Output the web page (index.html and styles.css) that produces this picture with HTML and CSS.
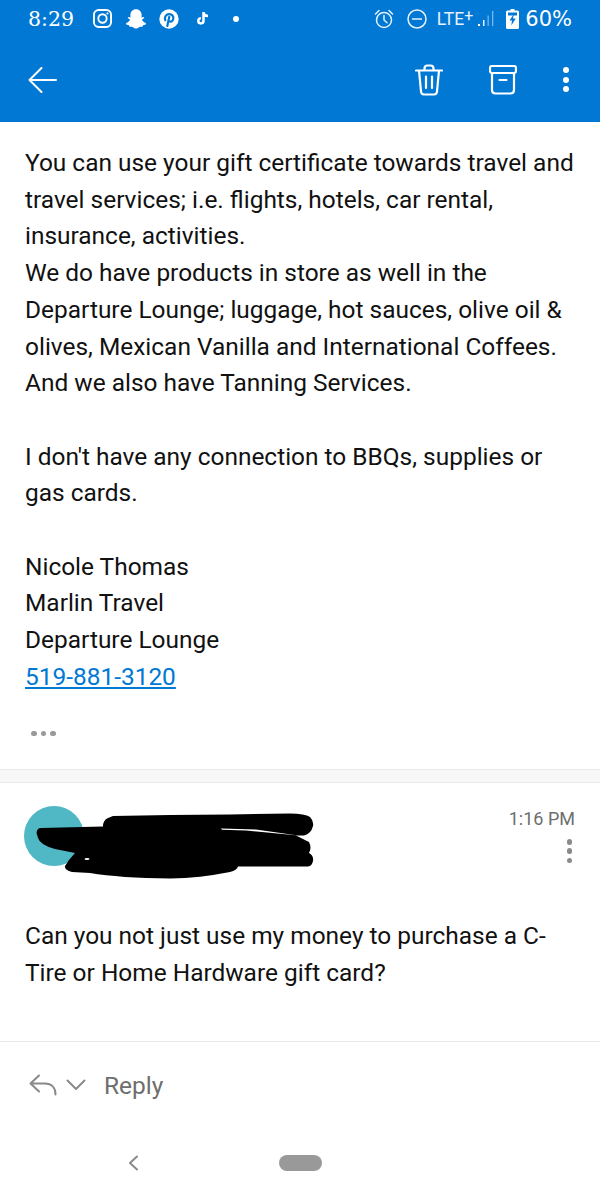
FILE: index.html
```html
<!DOCTYPE html>
<html lang="en">
<head>
    <meta charset="UTF-8">
    <meta name="viewport" content="width=device-width, initial-scale=1.0">
    <title>Message</title>
    <link rel="stylesheet" href="styles.css">
</head>
<body>
    <header class="appbar">
        <div class="status">
            <span class="clock">8:29</span>
            <div class="status-apps">
                <!-- instagram -->
                <svg class="insta" width="19" height="19" viewBox="0 0 20 20" fill="none" stroke="#fff" stroke-width="2"><rect x="1" y="1" width="18" height="18" rx="5"/><circle cx="10" cy="10" r="4.400"/><circle cx="15.200" cy="4.800" r="1.100" fill="#fff" stroke="none"/></svg>
                <!-- snapchat -->
                <svg class="snap" width="22" height="20" viewBox="0 0 22 20"><path fill="#fff" d="M11 .3c3.500 0 5.600 2.500 5.600 5.600 0 1 0 1.800-.1 2.500l2-.5.9 1.200-2.400 1.400c.5 1.600 2.100 2.900 4 3.700l-.2 1.300-2.800.8-.5 1.500-2.500-.1c-1.200.3-2.300 1.900-4 1.900s-2.800-1.600-4-1.900l-2.500.1-.5-1.500-2.800-.8-.2-1.300c1.900-.8 3.500-2.100 4-3.700L2.600 9.100l.9-1.200 2 .5c-.1-.7-.1-1.500-.1-2.500C5.400 2.800 7.500.3 11 .3z"/></svg>
                <!-- pinterest -->
                <svg class="pin" width="20" height="20" viewBox="0 0 20 20"><circle cx="10" cy="10" r="9.700" fill="#fff"/><path fill="none" stroke="#0078d4" stroke-width="2.200" stroke-linecap="round" d="M6.300 11.200c-1.300-3 .8-6 3.900-6 2.900 0 4.500 2 4.100 4.500-.4 2.400-2.500 3.800-4.300 2.500M10.300 7.800 8.300 17"/></svg>
                <!-- tiktok -->
                <svg class="tiktok" width="12" height="13" viewBox="0 0 12 13"><path fill="none" stroke="#fff" stroke-width="2.500" d="M6.500 0v8.800a2.600 2.600 0 1 1-2.600-2.600M6.500 .8c.3 1.800 2 3.100 4.500 3.200"/></svg>
                <span class="status-dot"></span>
            </div>
            <div class="status-right">
                <!-- alarm -->
                <svg width="20" height="20" viewBox="0 0 20 20" fill="none" stroke="#e6f1fb" stroke-width="1.500"><circle cx="10" cy="11" r="7.500"/><path d="M10 6.500V11l3 2.800M1.500 5 5 1.500M15 1.500 18.500 5" stroke-linecap="round"/></svg>
                <!-- do not disturb -->
                <svg class="dnd" width="20" height="20" viewBox="0 0 20 20" fill="none" stroke="#e6f1fb" stroke-width="1.500"><circle cx="10" cy="10" r="9"/><path d="M5 10h10"/></svg>
                <span class="lte">LTE<sup>+</sup></span>
                <!-- signal -->
                <svg class="signal" width="16" height="17" viewBox="0 0 16 17"><rect x="0" y="14" width="2" height="2" fill="#fff"/><rect x="5" y="10" width="1.500" height="6" fill="#e6f1fb"/><rect x="9.500" y="5.500" width="1.300" height="10.500" fill="#7db6e8"/><rect x="14" y="1" width="1.300" height="15" fill="#7db6e8"/></svg>
                <!-- battery -->
                <svg class="battery" width="13" height="20" viewBox="0 0 13 20"><path fill="#fff" d="M4.500 0h4v1.500h3q1.500 0 1.500 1.500v15.500q0 1.500-1.500 1.500h-10Q0 20 0 18.500V3q0-1.500 1.500-1.500h3z"/><path fill="#0078d4" d="M2 3.500h9v3H2z"/><path fill="#0078d4" d="M7.800 5 3.500 11.500H6L5.300 16.500 9.800 9.500H7z"/></svg>
                <span class="battery-pct">60%</span>
            </div>
        </div>
        <div class="actions">
            <svg class="back" width="30" height="26" viewBox="0 0 30 26" fill="none" stroke="#fff" stroke-width="2" stroke-linecap="round" stroke-linejoin="round"><path d="M13.500 1 1.500 13l12 12M1.500 13h26.500"/></svg>
            <div class="action-icons">
                <svg width="28" height="32" viewBox="0 0 28 32" fill="none" stroke="#fff" stroke-width="2.200" stroke-linecap="round" stroke-linejoin="round"><path d="M1 6.500h26M9.500 6.500V4.500q0-3 3-3h3q3 0 3 3v2M4 6.500l2 21q.3 3 3 3h10q2.700 0 3-3l2-21M11 12.500v11.500M17 12.500v11.500"/></svg>
                <svg width="28" height="30" viewBox="0 0 28 30" fill="none" stroke="#fff" stroke-width="2.200" stroke-linecap="round" stroke-linejoin="round"><rect x="1" y="1" width="26" height="7" rx="2"/><path d="M3 8v17q0 3.500 3.500 3.500h15q3.500 0 3.500-3.500V8M10.500 15h7"/></svg>
                <div class="kebab kebab-white"><i></i><i></i><i></i></div>
            </div>
        </div>
    </header>

    <main class="thread">
        <section class="message">
            <p class="body-text">You can use your gift certificate towards travel and<br>travel services; i.e. flights, hotels, car rental,<br>insurance, activities.<br>We do have products in store as well in the<br>Departure Lounge; luggage, hot sauces, olive oil &amp;<br>olives, Mexican Vanilla and International Coffees.<br>And we also have Tanning Services.<br><br>I don't have any connection to BBQs, supplies or<br>gas cards.<br><br>Nicole Thomas<br>Marlin Travel<br>Departure Lounge<br><a href="#">519-881-3120</a></p>
            <div class="more-dots"><i></i><i></i><i></i></div>
        </section>

        <div class="divider"></div>

        <section class="message reply-msg">
            <div class="sender">
                <div class="avatar"></div>
                <div class="meta">
                    <span class="time">1:16 PM</span>
                    <div class="kebab kebab-grey"><i></i><i></i><i></i></div>
                </div>
                <!-- scribbled out sender name, viewBox is in page coords -->
                <svg class="scribble" width="290" height="76" viewBox="30 808 290 76">
                    <path fill="#000" d="M36.500 833Q37 828 41 828L103 826.500Q103 820 108 818L113 816 170 815 230 814.500 290 813.500Q305 813.500 310 817 314 821 313 826 311 834 304 835.500L296 835.500 300 837.500 309 842Q312 848 309 853 314 856 313 861 312 866 308 866.500L238 866.500Q237 870 230 872 200 878 170 878.500 120 878 90 873L72 872Q64 870 65 866L69 860 75 853 55 849Q40 845 38 838z"/>
                    <path fill="#fff" d="M221 828.500 256 829.500 298 835.500 262 832 246 830.500 222 829.800z"/>
                    <ellipse cx="87" cy="859" rx="2.500" ry="1" fill="#fff"/>
                </svg>
            </div>
            <p class="body-text reply-text">Can you not just use my money to purchase a C-<br>Tire or Home Hardware gift card?</p>
        </section>
    </main>

    <footer class="reply-bar">
        <svg width="28" height="22" viewBox="0 0 28 22" fill="none" stroke="#8a8a8a" stroke-width="2" stroke-linecap="round" stroke-linejoin="round"><path d="M10 1.500 1.500 9.500l8.500 8M1.500 9.500H16c6.500 0 10.500 4 10.500 11"/></svg>
        <svg class="reply-chevron" width="20" height="12" viewBox="0 0 20 12" fill="none" stroke="#8a8a8a" stroke-width="2" stroke-linecap="round" stroke-linejoin="round"><path d="M1.500 1.500 10 10l8.500-8.500"/></svg>
        <span class="reply-label">Reply</span>
    </footer>

    <nav class="navbar">
        <svg class="nav-back" width="11" height="16" viewBox="0 0 11 16" fill="none" stroke="#8a8a8a" stroke-width="2" stroke-linecap="round" stroke-linejoin="round"><path d="M9 1.500 2 8l7 6.500"/></svg>
        <span class="nav-pill"></span>
    </nav>
</body>
</html>
```

FILE: styles.css
```css
* {
    box-sizing: border-box;
}

body {
    margin: 0;
    width: 600px;
    height: 1200px;
    overflow: hidden;
    background: #fff;
    font-family: Roboto, sans-serif;
    color: #111;
}

.appbar {
    height: 122px;
    background: #0078d4;
    color: #fff;
}

.status {
    height: 37px;
    padding: 0 28px;
    display: flex;
    align-items: center;
}

.clock {
    font-family: "DejaVu Serif", serif;
    font-size: 20.500px;
    width: 65px;
}

.status-apps {
    display: flex;
    align-items: center;
}

.snap {
    margin-left: 13px;
}

.pin {
    margin-left: 12px;
}

.tiktok {
    margin-left: 18px;
}

.status-dot {
    width: 6px;
    height: 6px;
    margin-left: 24px;
    border-radius: 50%;
    background: #fff;
}

.status-right {
    margin-left: auto;
    display: flex;
    align-items: center;
}

.dnd {
    margin-left: 13px;
}

.lte {
    margin-left: 10px;
    font-size: 17.500px;
    color: #e6f1fb;
}

.lte sup {
    font-size: 16px;
    line-height: 0;
    vertical-align: 4px;
}

.signal {
    margin-left: 5px;
}

.battery {
    margin-left: 12px;
}

.battery-pct {
    margin-left: 6px;
    font-family: "DejaVu Sans", sans-serif;
    font-size: 21px;
}

.actions {
    height: 85px;
    padding: 0 31px 0 28px;
    display: flex;
    align-items: center;
    justify-content: space-between;
}

.action-icons {
    display: flex;
    align-items: center;
    gap: 46px;
}

.kebab {
    display: flex;
    flex-direction: column;
}

.kebab i {
    display: block;
    border-radius: 50%;
}

.kebab-white {
    gap: 3.500px;
}

.kebab-white i {
    width: 6px;
    height: 6px;
    background: #fff;
}

.kebab-grey {
    gap: 3.800px;
    margin-right: 3px;
}

.kebab-grey i {
    width: 5.500px;
    height: 5.500px;
    background: #8a8a8a;
}

.message {
    padding: 0 25px;
}

.body-text {
    margin: 0;
    padding-top: 23px;
    font-size: 24.450px;
    line-height: 36.700px;
    white-space: nowrap;
}

.body-text a {
    color: #0078d4;
}

.more-dots {
    margin-top: 35px;
    padding-left: 6px;
    display: flex;
    gap: 4px;
}

.more-dots i {
    width: 5.500px;
    height: 5.500px;
    border-radius: 50%;
    background: #999;
}

.divider {
    height: 14px;
    margin-top: 33px;
    background: #f7f7f7;
    border-top: 1px solid #e8e8e8;
    border-bottom: 1px solid #e8e8e8;
}

.sender {
    position: relative;
    height: 92px;
    padding-top: 23px;
    display: flex;
    justify-content: space-between;
}

.avatar {
    width: 60px;
    height: 60px;
    margin-left: -1px;
    border-radius: 50%;
    background: #4fb8c4;
}

.meta {
    display: flex;
    flex-direction: column;
    align-items: flex-end;
    gap: 7px;
}

.time {
    font-size: 18px;
    line-height: 26px;
    color: #6e6e6e;
}

.scribble {
    position: absolute;
    left: 5px;
    top: 25px;
}

.reply-text {
    padding-top: 43px;
}

.reply-bar {
    margin-top: 50px;
    height: 87px;
    padding: 0 0 0 29px;
    border-top: 1px solid #e8e8e8;
    display: flex;
    align-items: center;
}

.reply-chevron {
    margin-left: 9px;
}

.reply-label {
    margin-left: 18px;
    font-size: 24.500px;
    color: #6e6e6e;
}

.navbar {
    height: 69px;
    padding: 0 0 0 128px;
    display: flex;
    align-items: center;
}

.nav-pill {
    width: 43px;
    height: 16px;
    margin-left: 140px;
    border-radius: 8px;
    background: #999;
}
```
